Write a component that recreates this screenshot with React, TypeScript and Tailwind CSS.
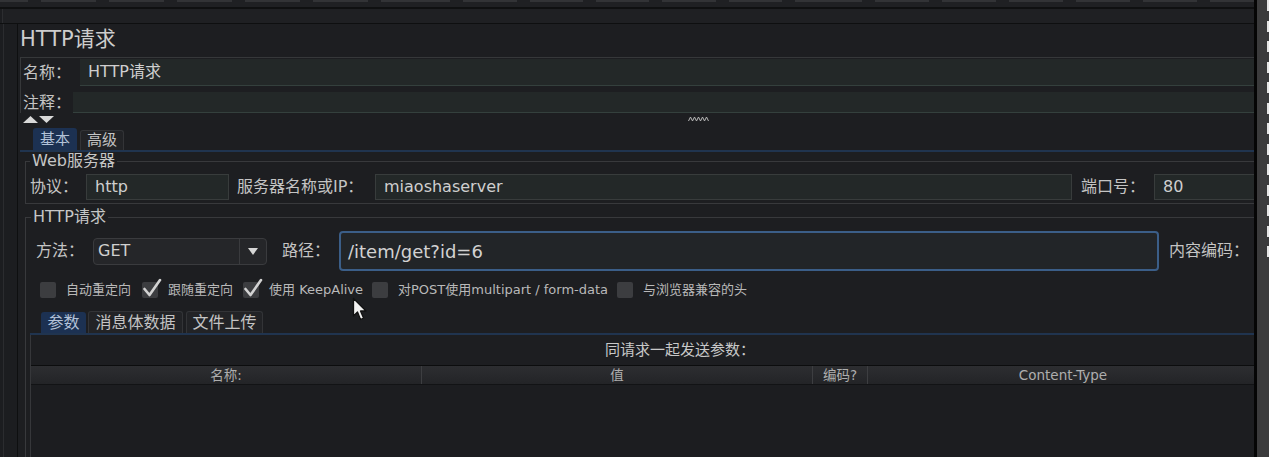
import React from "react";

function Check() {
  return (
    <svg className="pointer-events-none absolute -top-[4px] left-[1px]" width="19" height="20" viewBox="0 0 19 20">
      <path d="M1.5 11 L6.5 17 L17 2" fill="none" stroke="#d2d2d2" strokeWidth="2.6" strokeLinecap="round" strokeLinejoin="round" />
    </svg>
  );
}

function Box({ checked }: { checked?: boolean }) {
  return (
    <div className="relative h-[16px] w-[16px] shrink-0 rounded-[2px] bg-[#3c3d40]">
      {checked ? <Check /> : null}
    </div>
  );
}

export default function App() {
  const segs = [28, 55, 55, 55, 55, 55, 69, 54, 53, 53, 54, 53, 67, 54, 54, 54, 54, 54, 54];
  const ticks = Array.from({ length: 13 });
  return (
    <div className="relative flex h-[457px] w-[1269px] overflow-hidden bg-[#1c1d20] font-[DejaVu_Sans,Noto_Sans_CJK_SC,sans-serif] text-[#c4c4c4]">
      <div className="flex w-[1254px] shrink-0 flex-col overflow-hidden">
        {/* top toolbar remnants */}
        <div className="h-[7px] shrink-0 bg-[#1f2023]">
          <div className="flex h-[2px] gap-[13px]">
            {segs.map((w, i) => (
              <div key={i} className="h-full shrink-0 bg-[#323336]" style={{ width: w }} />
            ))}
          </div>
        </div>
        <div className="h-[2px] shrink-0 bg-[#0f1011]" />
        <div className="ml-[2px] h-[14px] shrink-0 border-l border-[#2c2d30] bg-[#1f2023]" />
        <div className="h-px shrink-0 bg-[#0e0f10]" />
        <div className="flex min-h-0 flex-1">
          <div className="w-[17px] shrink-0 pl-[3px]">
            <div className="h-full w-px bg-[#2b2c2f]" />
          </div>
          <div className="flex-1 overflow-hidden border-l border-[#0e0f10] bg-[#1d1e21]">
            <div className="w-[1290px]">
              {/* title */}
              <div className="h-[33px] pl-[2px] pt-[3px] text-[21px] leading-[24px] text-[#cdcdcd]">HTTP请求</div>
              {/* name / comment */}
              <div className="ml-[2px] border-l border-t border-[#36383a]">
                <div className="flex h-[29px]">
                  <div className="flex w-[59px] items-center pl-[2px] text-[16px] leading-[20px]">名称：</div>
                  <div className="mt-[1px] flex h-[27px] flex-1 items-center border-b border-[#34403d] bg-[#232828] pl-[8px] text-[16px] text-[#cfcfcf]">
                    HTTP请求
                  </div>
                </div>
                <div className="flex h-[26px] pt-[5px]">
                  <div className="flex h-[21px] w-[52px] items-center pl-[2px] text-[16px] leading-[20px]">注释：</div>
                  <div className="h-[21px] flex-1 border-b border-[#34403d] bg-[#232828]" />
                </div>
              </div>
              {/* splitter arrows */}
              <div className="flex h-[12px] items-center">
                <svg className="ml-[5px]" width="31" height="9" viewBox="0 0 31 9">
                  <polygon points="0,8 7.5,1 15,8" fill="#d9d9d9" />
                  <polygon points="16,1 31,1 23.5,8" fill="#d9d9d9" />
                </svg>
                <svg className="ml-[634px]" width="21" height="6" viewBox="0 0 21 6">
                  <polyline points="0.5,5 2.5,1 4.5,5 6.5,1 8.5,5 10.5,1 12.5,5 14.5,1 16.5,5 18.5,1 20.5,5" fill="none" stroke="#b8b8b8" strokeWidth="1" />
                </svg>
              </div>
              {/* top tabs */}
              <div className="flex h-[25px] items-end gap-[3px] pl-[15px]">
                <div className="flex h-[22px] w-[44px] items-center justify-center rounded-t-[3px] bg-[#1c3152] text-[15px] text-[#b3c2d8]">基本</div>
                <div className="flex h-[20px] w-[44px] items-center justify-center rounded-t-[3px] border border-b-0 border-[#333437] bg-[#222326] text-[15px] text-[#c4c4c4]">高级</div>
              </div>
              <div className="ml-[2px] h-[2px] bg-[#20344f]" />
              {/* tab content */}
              <div className="pl-[7px]">
                <fieldset className="border border-[#38393c] pb-[3px] pl-[4px]">
                  <legend className="px-[2px] text-[16px] leading-[18px] text-[#c6c6c6]">Web服务器</legend>
                  <div className="mt-[4px] flex h-[26px] items-center text-[16px]">
                    <div className="w-[56px] shrink-0">协议：</div>
                    <div className="flex h-[26px] w-[143px] shrink-0 items-center border border-[#383c3c] bg-[#232828] pl-[8px] text-[#cfcfcf]">http</div>
                    <div className="ml-[8px] w-[138px] shrink-0 whitespace-nowrap">服务器名称或IP：</div>
                    <div className="flex h-[26px] w-[697px] shrink-0 items-center border border-[#383c3c] bg-[#232828] pl-[8px] text-[#cfcfcf]">miaoshaserver</div>
                    <div className="ml-[9px] w-[73px] shrink-0 whitespace-nowrap">端口号：</div>
                    <div className="flex h-[26px] flex-1 items-center border border-[#383c3c] bg-[#232828] pl-[8px] text-[#cfcfcf]">80</div>
                  </div>
                </fieldset>
                <fieldset className="mt-[4px] border border-[#38393c] pl-[10px]">
                  <legend className="-ml-[5px] px-[2px] text-[16px] leading-[18px] text-[#c6c6c6]">HTTP请求</legend>
                  <div className="mt-[5px] flex h-[40px] items-center text-[16px]">
                    <div className="w-[57px] shrink-0">方法：</div>
                    <div className="flex h-[27px] w-[174px] shrink-0 rounded-[4px] border border-[#3a3b3e] bg-[#252629]">
                      <div className="flex w-[146px] items-center border-r border-[#3a3b3e] pl-[4px] text-[#d0d0d0]">GET</div>
                      <div className="flex flex-1 items-center justify-center">
                        <svg width="10" height="7" viewBox="0 0 10 7">
                          <polygon points="0,0 10,0 5,7" fill="#d6d6d6" />
                        </svg>
                      </div>
                    </div>
                    <div className="ml-[15px] w-[57px] shrink-0">路径：</div>
                    <div className="flex h-[40px] w-[820px] shrink-0 items-center rounded-[4px] border-2 border-[#3b5e88] bg-[#222528] pl-[7px] text-[18px] text-[#d2d2d2]">
                      /item/get?id=6
                    </div>
                    <div className="ml-[10px] shrink-0 whitespace-nowrap">内容编码：</div>
                  </div>
                  {/* checkboxes */}
                  <div className="ml-[4px] mt-[11px] flex h-[16px] items-center whitespace-nowrap text-[13px] leading-[16px] text-[#b9b9b9]">
                    <Box />
                    <div className="ml-[10px] w-[64px]">自动重定向</div>
                    <div className="ml-[12px]"><Box checked /></div>
                    <div className="ml-[10px] w-[63px]">跟随重定向</div>
                    <div className="ml-[12px]"><Box checked /></div>
                    <div className="ml-[10px] w-[91px]">使用 KeepAlive</div>
                    <div className="ml-[12px]"><Box /></div>
                    <div className="ml-[10px] w-[209px]">对POST使用multipart / form-data</div>
                    <div className="ml-[10px]"><Box /></div>
                    <div className="ml-[10px]">与浏览器兼容的头</div>
                  </div>
                  {/* inner tabs */}
                  <div className="ml-[5px] mt-[13px] flex h-[22px] items-end text-[16px]">
                    <div className="flex h-[21px] w-[45px] items-center justify-center rounded-t-[3px] bg-[#1c3152] text-[#b3c2d8]">参数</div>
                    <div className="ml-[2px] flex h-[22px] w-[95px] items-center justify-center rounded-t-[3px] border border-b-0 border-[#333437] bg-[#222326]">消息体数据</div>
                    <div className="ml-[3px] flex h-[22px] w-[77px] items-center justify-center rounded-t-[3px] border border-b-0 border-[#333437] bg-[#222326]">文件上传</div>
                  </div>
                  <div className="-ml-[6px] h-[2px] bg-[#20344f]" />
                  <div className="-ml-[6px] border-l border-[#36373a]">
                    <div className="flex h-[30px] items-center pl-[574px] text-[15px] text-[#c8c8c8]">同请求一起发送参数：</div>
                    <div className="border-t border-[#0c0d0e]">
                      <div className="flex h-[19px] border-b border-[#121315] bg-gradient-to-b from-[#2d2e31] to-[#232427] text-[13.5px] leading-[18px] text-[#aeaeae]">
                        <div className="flex w-[391px] shrink-0 items-center justify-center border-r border-[#3d3e41]">名称:</div>
                        <div className="flex w-[391px] shrink-0 items-center justify-center border-r border-[#3d3e41]">值</div>
                        <div className="flex w-[55px] shrink-0 items-center justify-center border-r border-[#3d3e41]">编码?</div>
                        <div className="flex w-[391px] shrink-0 items-center justify-center border-r border-[#3d3e41]">Content-Type</div>
                      </div>
                      <div className="h-[120px] bg-[#1c1d20]" />
                    </div>
                  </div>
                </fieldset>
              </div>
            </div>
          </div>
        </div>
      </div>
      <div className="w-[3px] shrink-0 bg-[#050505]" />
      <div className="flex w-[12px] shrink-0 flex-col items-end gap-[9.5px] bg-[#3b3b3c]">
        {ticks.map((_, i) => (
          <div key={i} className="h-[11px] w-[2px] shrink-0 bg-[#e6e6e6]" />
        ))}
      </div>
      {/* mouse cursor */}
      <svg className="pointer-events-none absolute left-[352px] top-[297px]" width="17" height="25" viewBox="0 0 17 25">
        <path d="M1.5 1.5 L1.5 19 L5.5 15 L8.5 22.5 L11.5 21 L8.5 14 L14 14 Z" fill="#f2f2f2" stroke="#111" strokeWidth="1.3" strokeLinejoin="round" />
      </svg>
    </div>
  );
}
